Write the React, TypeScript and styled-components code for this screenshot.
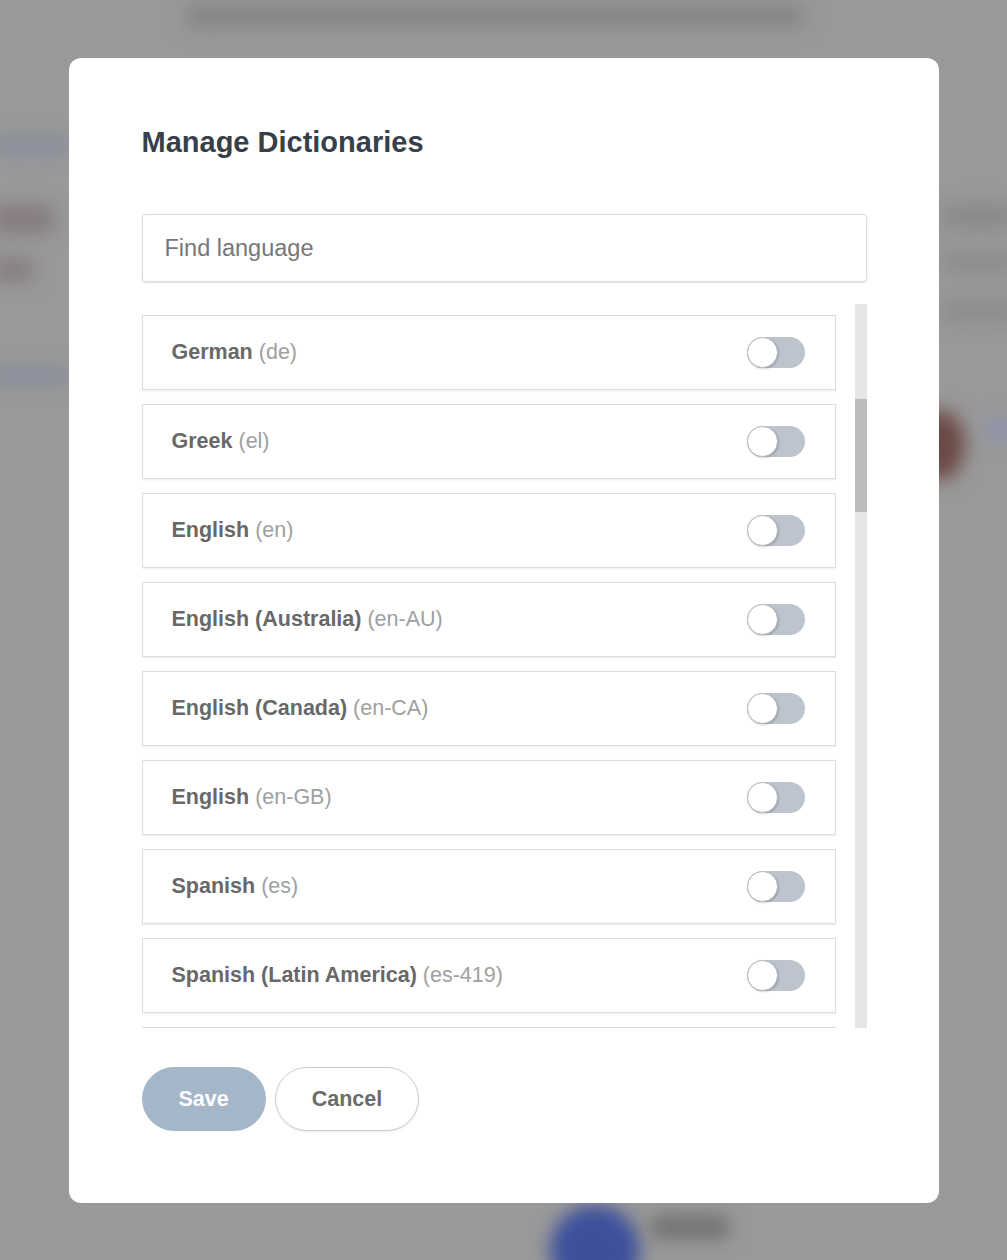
import React from "react";
import styled, { createGlobalStyle } from "styled-components";

const GlobalStyle = createGlobalStyle`
  html, body {
    margin: 0;
    padding: 0;
    width: 100%;
    height: 100%;
    overflow: hidden;
    background: #999999;
  }
  * { box-sizing: border-box; }
  body {
    font-family: "Liberation Sans", Arial, Helvetica, sans-serif;
  }
`;

const Backdrop = styled.div`
  position: fixed;
  inset: 0;
  background: #999999;
  overflow: hidden;
`;

const Blob = styled.div<{ $c: string; $r?: string }>`
  position: absolute;
  background: ${(p) => p.$c};
  border-radius: ${(p) => p.$r || "10px"};
  filter: blur(9px);
`;

const Overlay = styled.div`
  position: fixed;
  inset: 0;
  display: flex;
  justify-content: center;
  align-items: flex-start;
  padding-top: 58px;
`;

const Modal = styled.div`
  width: 870px;
  height: 1145px;
  background: #ffffff;
  border-radius: 12px;
  padding: 67px 72px 72px 73px;
  display: flex;
  flex-direction: column;
`;

const Title = styled.h2`
  margin: 0;
  font-size: 29px;
  line-height: 34px;
  font-weight: 700;
  color: #363f4a;
`;

const SearchInput = styled.input`
  margin-top: 55px;
  height: 68px;
  width: 100%;
  border: 1px solid #dcdcdc;
  border-radius: 4px;
  box-shadow: 0 1px 2px rgba(0, 0, 0, 0.12);
  padding: 0 22px;
  font-family: "Liberation Sans", Arial, sans-serif;
  font-size: 23.5px;
  color: #333;
  outline: none;
  &::placeholder {
    color: #777777;
  }
`;

const ListArea = styled.div`
  margin-top: 22px;
  height: 724px;
  display: flex;
  gap: 19px;
  overflow: hidden;
`;

const List = styled.div`
  flex: 1;
  display: flex;
  flex-direction: column;
  gap: 14px;
  padding-top: 11px;
  overflow: hidden;
`;

const Row = styled.div`
  flex: 0 0 75px;
  height: 75px;
  border: 1px solid #dddddd;
  box-shadow: 0 1px 2px rgba(0, 0, 0, 0.08);
  display: flex;
  align-items: center;
  justify-content: space-between;
  padding: 0 30px 0 29px;
  background: #fff;
`;

const Label = styled.span`
  font-size: 21.5px;
  font-weight: 700;
  color: #686868;
`;

const Code = styled.span`
  font-weight: 400;
  color: #a0a0a0;
`;

const Toggle = styled.div<{ $on: boolean }>`
  width: 58px;
  height: 31px;
  border-radius: 16px;
  background: ${(p) => (p.$on ? "#5a8fd0" : "#bec4ce")};
  display: flex;
  align-items: center;
  justify-content: ${(p) => (p.$on ? "flex-end" : "flex-start")};
`;

const Knob = styled.div`
  width: 31px;
  height: 31px;
  border-radius: 50%;
  background: #ffffff;
  border: 1px solid #b8bcc4;
  box-shadow: 1px 1px 2px rgba(0, 0, 0, 0.18);
`;

const ScrollTrack = styled.div`
  flex: 0 0 12px;
  background: #e6e6e6;
  display: flex;
  flex-direction: column;
`;

const ScrollThumb = styled.div<{ $top: number; $h: number }>`
  margin-top: ${(p) => p.$top}px;
  height: ${(p) => p.$h}px;
  background: #bcbcbc;
`;

const Buttons = styled.div`
  margin-top: 39px;
  display: flex;
  gap: 9px;
`;

const Button = styled.button<{ $primary?: boolean }>`
  height: 64px;
  border-radius: 32px;
  padding: 0 36px;
  font-family: "Liberation Sans", Arial, sans-serif;
  font-size: 21.5px;
  font-weight: 700;
  cursor: pointer;
  background: ${(p) => (p.$primary ? "#a4b6c8" : "#ffffff")};
  color: ${(p) => (p.$primary ? "#ffffff" : "#6b6b6b")};
  border: 1px solid ${(p) => (p.$primary ? "#a4b6c8" : "#cccccc")};
  box-shadow: ${(p) => (p.$primary ? "none" : "0 1px 2px rgba(0,0,0,0.08)")};
`;

const languages: [string, string][] = [
  ["German", "de"],
  ["Greek", "el"],
  ["English", "en"],
  ["English (Australia)", "en-AU"],
  ["English (Canada)", "en-CA"],
  ["English", "en-GB"],
  ["Spanish", "es"],
  ["Spanish (Latin America)", "es-419"],
];

export default function App() {
  return (
    <>
      <GlobalStyle />
      <Backdrop>
        <Blob $c="#868686" style={{ left: 185, top: 4, width: 620, height: 24 }} />
        <Blob $c="#8a8e9c" style={{ left: -10, top: 135, width: 80, height: 20 }} />
        <Blob $c="#857c7c" style={{ left: -10, top: 205, width: 65, height: 28 }} />
        <Blob $c="#877e7e" style={{ left: -10, top: 258, width: 45, height: 24 }} />
        <Blob $c="#8a8e9c" style={{ left: -10, top: 366, width: 80, height: 20 }} />
        <Blob $c="#888888" style={{ left: 940, top: 205, width: 80, height: 22 }} />
        <Blob $c="#8c8c8c" style={{ left: 940, top: 252, width: 80, height: 20 }} />
        <Blob $c="#8c8c8c" style={{ left: 940, top: 300, width: 80, height: 22 }} />
        <Blob $c="#6b4a45" $r="50%" style={{ left: 915, top: 410, width: 50, height: 70 }} />
        <Blob $c="#8c92b0" style={{ left: 985, top: 420, width: 30, height: 20 }} />
        <Blob $c="#3e509c" $r="50%" style={{ left: 550, top: 1205, width: 90, height: 90 }} />
        <Blob $c="#727272" style={{ left: 650, top: 1215, width: 80, height: 24 }} />
      </Backdrop>
      <Overlay>
        <Modal>
          <Title>Manage Dictionaries</Title>
          <SearchInput placeholder="Find language" />
          <ListArea>
            <List>
              {languages.map(([name, code]) => (
                <Row key={code}>
                  <Label>
                    {name} <Code>({code})</Code>
                  </Label>
                  <Toggle $on={false}>
                    <Knob />
                  </Toggle>
                </Row>
              ))}
              <Row aria-hidden="true" />
            </List>
            <ScrollTrack>
              <ScrollThumb $top={95} $h={113} />
            </ScrollTrack>
          </ListArea>
          <Buttons>
            <Button $primary>Save</Button>
            <Button>Cancel</Button>
          </Buttons>
        </Modal>
      </Overlay>
    </>
  );
}
